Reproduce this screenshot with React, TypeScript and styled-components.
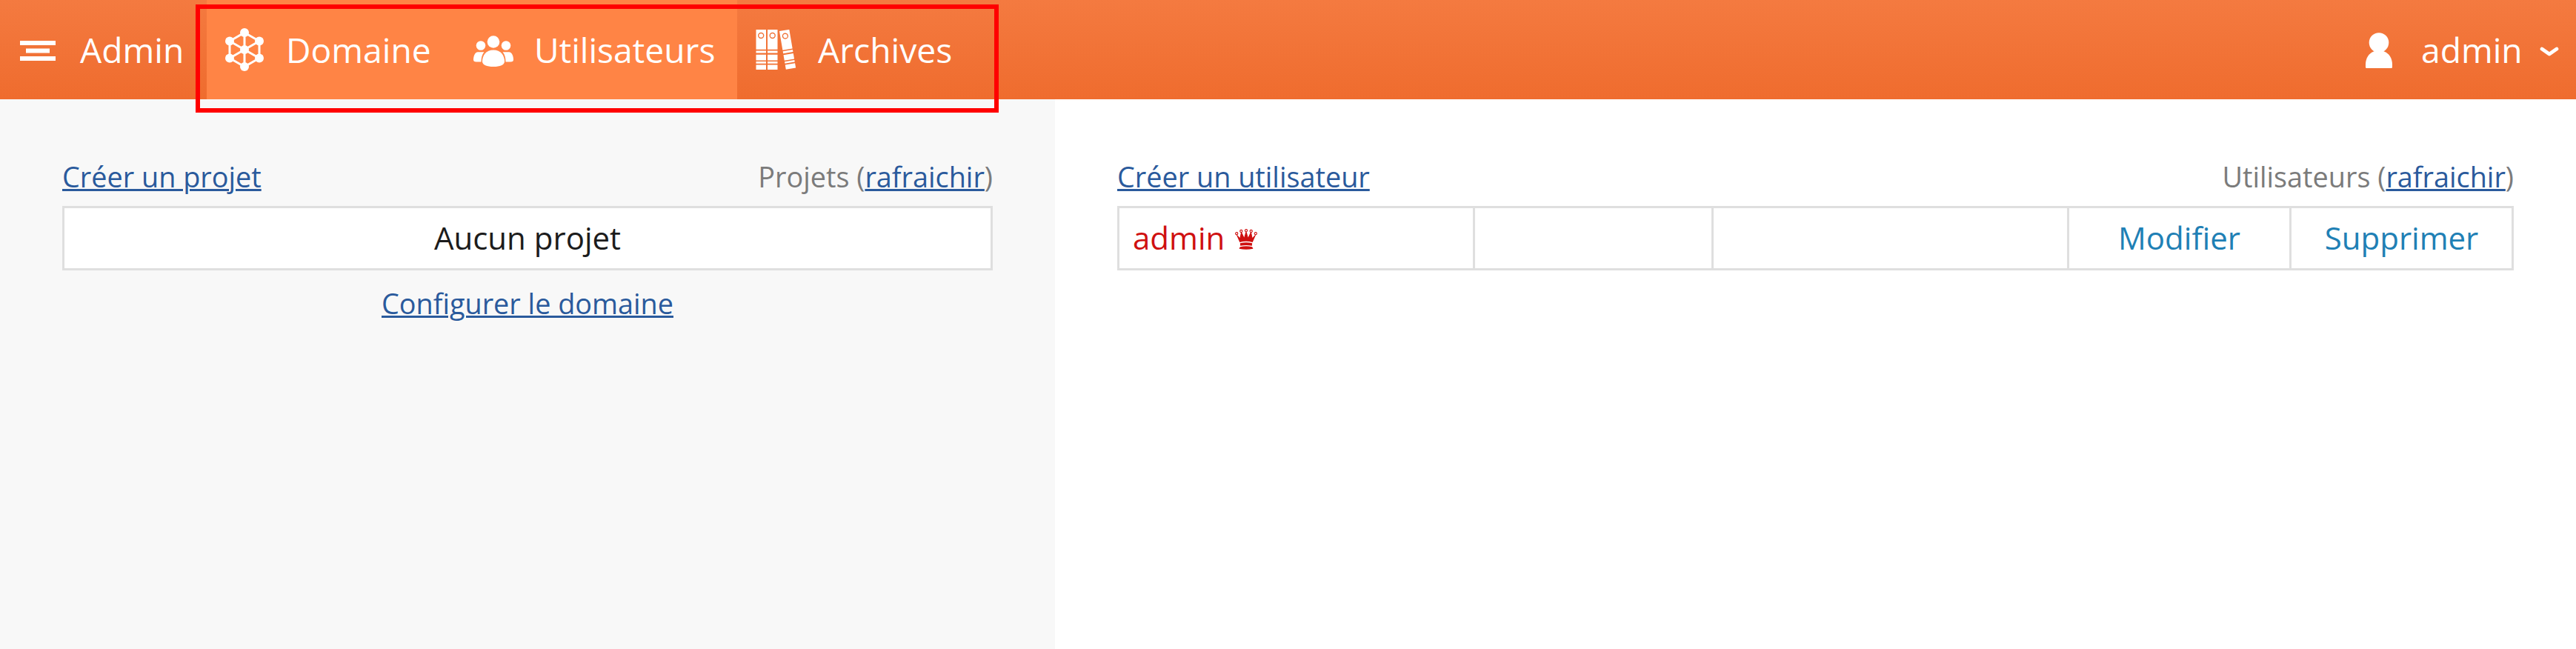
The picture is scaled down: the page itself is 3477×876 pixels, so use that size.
import React from "react";
import styled, { createGlobalStyle } from "styled-components";

const GlobalStyle = createGlobalStyle`
  * { box-sizing: border-box; }
  body {
    margin: 0;
    background: #fff;
    font-family: "Open Sans", "Noto Sans", sans-serif;
    overflow: hidden;
  }
`;

const Page = styled.div`
  position: relative;
  display: flex;
  flex-direction: column;
  width: 3477px;
  height: 876px;
`;

const Header = styled.header`
  display: flex;
  height: 134px;
  background: linear-gradient(#f47a40, #ef6c2e);
  color: #fff;
  font-size: 46.2px;
  white-space: nowrap;
`;

const HeaderItem = styled.div<{ $width: number; $active?: boolean; $pad: number; $gap: number }>`
  display: flex;
  align-items: center;
  width: ${(p) => p.$width}px;
  padding-left: ${(p) => p.$pad}px;
  gap: ${(p) => p.$gap}px;
  background: ${(p) => (p.$active ? "#ff8445" : "transparent")};
`;

const Label = styled.span`
  padding-top: 2px;
  line-height: 132px;
`;

const UserMenu = styled.div`
  display: flex;
  align-items: center;
  gap: 23px;
`;

const Spacer = styled.div`
  flex: 1;
`;

const Glyph = styled.svg<{ $drop?: number }>`
  display: block;
  flex: none;
  margin-top: ${(p) => p.$drop ?? 0}px;
  fill: currentColor;
`;

const Body = styled.main`
  display: flex;
  flex: 1;
`;

const Panel = styled.section<{ $width: number; $tinted?: boolean }>`
  width: ${(p) => p.$width}px;
  padding: 75px 84px 0;
  background: ${(p) => (p.$tinted ? "#f8f8f8" : "#fff")};
`;

const Caption = styled.div`
  display: flex;
  justify-content: space-between;
  height: 69px;
  font-size: 37.8px;
  line-height: 59px;
  color: #7b7b7b;
`;

const Link = styled.a`
  color: #2a5a9c;
  text-decoration: underline;
  text-decoration-thickness: 3px;
  cursor: pointer;
`;

const Table = styled.div<{ $columns: string }>`
  display: grid;
  grid-template-columns: ${(p) => p.$columns};
  height: 87px;
  border: 3px solid #dfdfdf;
  background: #fff;
  font-size: 42px;
  line-height: 80px;
`;

const Cell = styled.div<{ $centered?: boolean; $color?: string }>`
  display: flex;
  justify-content: ${(p) => (p.$centered ? "center" : "flex-start")};
  gap: 14px;
  padding: 0 ${(p) => (p.$centered ? 0 : 18)}px;
  color: ${(p) => p.$color ?? "#1c1c1c"};
  & + & { border-left: 3px solid #dfdfdf; }
`;

const Footer = styled.div`
  margin-top: 15px;
  text-align: center;
  font-size: 37.8px;
  line-height: 59px;
`;

const Highlight = styled.div`
  position: absolute;
  left: 264px;
  top: 6px;
  width: 1084px;
  height: 146px;
  border: 6px solid #f00;
`;

const MenuIcon = () => (
  <Glyph width="48" height="27" viewBox="0 0 48 27" $drop={2}>
    <path d="M0 0h48v6H0zM8 10.500h32v6H8zM0 21h48v6H0z" />
  </Glyph>
);

const DomainIcon = () => (
  <Glyph width="52" height="58" viewBox="0 0 52 58">
    <path
      d="M26 6 46 17.500V40.500L26 52 6 40.500V17.500ZM26 6V52M6 17.500 46 40.500M46 17.500 6 40.500"
      fill="none"
      stroke="currentColor"
      strokeWidth="3"
    />
    <circle cx="26" cy="6" r="6" />
    <circle cx="46" cy="17.500" r="6" />
    <circle cx="46" cy="40.500" r="6" />
    <circle cx="26" cy="52" r="6" />
    <circle cx="6" cy="40.500" r="6" />
    <circle cx="6" cy="17.500" r="6" />
    <circle cx="26" cy="29" r="6" />
  </Glyph>
);

const UsersIcon = () => (
  <Glyph width="54" height="42" viewBox="0 0 54 42" $drop={3}>
    <circle cx="27" cy="8.500" r="8.300" />
    <circle cx="10" cy="13.500" r="6.300" />
    <circle cx="44" cy="13.500" r="6.300" />
    <path d="M27 19.500c10 0 15 7.500 15 15.500 0 4.500-6 7-15 7s-15-2.500-15-7c0-8 5-15.500 15-15.500z" />
    <path d="M6 22.300h8.500C11.500 26 10.500 30 10.500 35.500H4C1 35.500 0 34.500 0 32.500 0 28 2 22.300 6 22.300z" />
    <path d="M48 22.300h-8.500c3 3.700 4 7.700 4 13.200H50c3 0 4-1 4-3 0-4.500-2-10.200-6-10.200z" />
  </Glyph>
);

const Binder = () => (
  <>
    <path d="M.5 0H14V26.800H.5zM.5 28.500H14V31.500H.5zM.5 33.700H14V41.500H.5zM.5 43H14V45.700H.5zM.5 47.500H14V54H.5z" />
    <circle cx="7.200" cy="8" r="3.500" fill="none" stroke="#f0743a" strokeWidth="1.400" />
  </>
);

const ArchivesIcon = () => (
  <Glyph width="56" height="55" viewBox="0 0 56 55">
    <Binder />
    <g transform="translate(15.500 0)"><Binder /></g>
    <g transform="translate(31.500 2.200) rotate(-9.700) scale(1 .97)"><Binder /></g>
  </Glyph>
);

const UserIcon = () => (
  <Glyph width="36" height="48" viewBox="0 0 36 48" $drop={2}>
    <circle cx="18" cy="13.500" r="13.300" />
    <path d="M12 25h12c7.500 2.500 12 9.500 12 18v3.500q0 1.500-1.500 1.500h-33Q0 48 0 46.500V43c0-8.500 4.500-15.500 12-18z" />
  </Glyph>
);

const ChevronIcon = () => (
  <Glyph width="26" height="16" viewBox="0 0 26 16" $drop={6}>
    <path d="M3 4 13 11 23 4" fill="none" stroke="currentColor" strokeWidth="4.700" strokeLinecap="round" strokeLinejoin="round" />
  </Glyph>
);

const CrownIcon = () => (
  <Glyph width="30" height="28" viewBox="0 0 30 28" $drop={28}>
    <g fill="none" stroke="currentColor" strokeWidth="1.100">
      <circle cx="2.200" cy="6.200" r="1.600" />
      <circle cx="8.300" cy="3" r="1.600" />
      <circle cx="15" cy="2.200" r="1.600" />
      <circle cx="21.700" cy="3" r="1.600" />
      <circle cx="27.800" cy="6.200" r="1.600" />
    </g>
    <path d="M2.400 7.500 6.500 12 8 4.800h1.200L12.300 11.500 14.400 4h1.200l2.100 7.500L20.800 4.800H22L23.500 12l4.100-4.500.5.500-4.400 10Q15 15.500 6.300 18L1.900 8z" />
    <path d="M6.800 19.200Q15 17.200 23.200 19.200L22.800 22.800Q15 21.300 7.200 22.800z" />
    <path d="M7 24.200Q15 22.300 23 24.200 24.500 26 24.300 26.700 15 28.800 5.700 26.700 5.500 26 7 24.200z" />
  </Glyph>
);

export default function App() {
  return (
    <Page>
      <GlobalStyle />
      <Header>
        <HeaderItem $width={279} $pad={27} $gap={33}><MenuIcon /><Label>Admin</Label></HeaderItem>
        <HeaderItem $width={330} $pad={25} $gap={30} $active><DomainIcon /><Label>Domaine</Label></HeaderItem>
        <HeaderItem $width={386} $pad={30} $gap={28} $active><UsersIcon /><Label>Utilisateurs</Label></HeaderItem>
        <HeaderItem $width={350} $pad={25} $gap={28}><ArchivesIcon /><Label>Archives</Label></HeaderItem>
        <Spacer />
        <HeaderItem $width={284} $pad={0} $gap={39}>
          <UserIcon />
          <UserMenu>
            <Label>admin</Label>
            <ChevronIcon />
          </UserMenu>
        </HeaderItem>
      </Header>
      <Body>
        <Panel $width={1424} $tinted>
          <Caption>
            <Link>Créer un projet</Link>
            <span>Projets (<Link>rafraichir</Link>)</span>
          </Caption>
          <Table $columns="1fr"><Cell $centered>Aucun projet</Cell></Table>
          <Footer><Link>Configurer le domaine</Link></Footer>
        </Panel>
        <Panel $width={2053}>
          <Caption>
            <Link>Créer un utilisateur</Link>
            <span>Utilisateurs (<Link>rafraichir</Link>)</span>
          </Caption>
          <Table $columns="477px 322px 480px 300px 1fr">
            <Cell $color="#cf1010">admin <CrownIcon /></Cell>
            <Cell />
            <Cell />
            <Cell $centered $color="#1f80b5">Modifier</Cell>
            <Cell $centered $color="#1f80b5">Supprimer</Cell>
          </Table>
        </Panel>
      </Body>
      <Highlight />
    </Page>
  );
}
